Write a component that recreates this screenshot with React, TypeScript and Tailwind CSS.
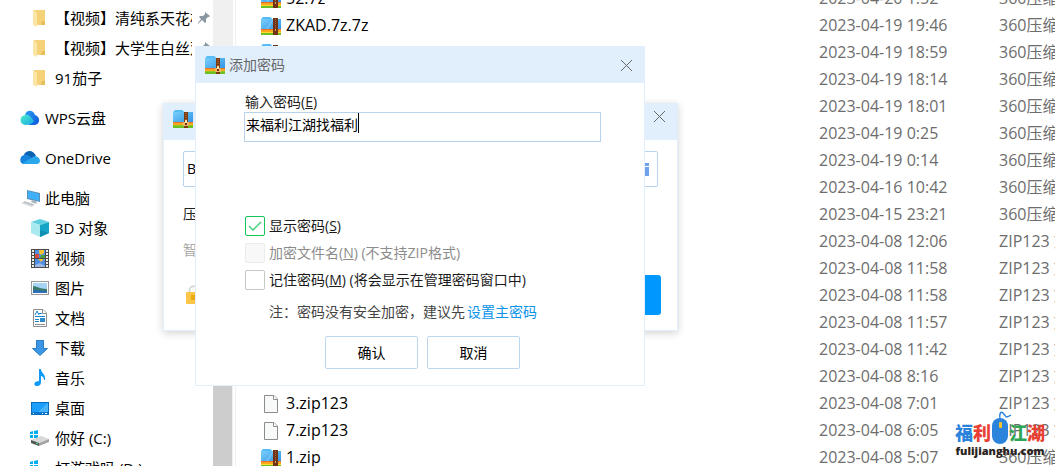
import React, { useState } from "react";

type IconType = "zip" | "file";

interface FileEntry {
  icon: IconType;
  name: string;
  date: string;
  type: string;
}

interface NavEntry {
  label: string;
  icon: React.ReactNode;
  pinned?: boolean;
}

const ZipIcon = ({ buckle = false }: { buckle?: boolean }) => (
  <svg width="20" height="18" viewBox="0 0 20 18" className="shrink-0" aria-hidden="true">
    <defs>
      <linearGradient id="zipBlue" x1="0" y1="0" x2="1" y2="1">
        <stop offset="0" stopColor="#7fd3ff" />
        <stop offset="1" stopColor="#2f93e2" />
      </linearGradient>
    </defs>
    <path d="M0 2 L2 0 H9 L11 2 H20 V13 H0Z" fill="url(#zipBlue)" />
    <path d="M2 0 H9 L11 2 H1Z" fill="#55bdf5" />
    {!buckle && <path d="M5 12 L11 3 H13 L7 12Z" fill="#8ad2fb" opacity="0.6" />}
    <rect y="12" width="20" height="1" fill="#e8702a" />
    <rect y="13" width="20" height="2" fill="#fba61c" />
    <rect y="15" width="20" height="1" fill={buckle ? "#8bc924" : "#fdd835"} />
    <rect y="16" width="20" height="2" fill="#6cc024" />
    {buckle ? (
      <>
        <rect x="11" y="2" width="4" height="16" fill="#7a3a12" />
        <path d="M13 3 V11" stroke="#c07a3c" strokeWidth="1" strokeDasharray="1 1" />
        <rect x="10" y="12" width="6" height="4" rx="1" fill="#f0b96b" />
        <rect x="12" y="10" width="2" height="4" fill="#fbe3b0" />
        <rect x="12" y="13" width="2" height="2" fill="#6b2f0d" />
      </>
    ) : (
      <>
        <rect x="12" y="1" width="5" height="17" fill="#6f3415" />
        <path d="M14.5 2 V12" stroke="#a3673a" strokeWidth="1" strokeDasharray="1 1" />
        <rect x="14" y="12" width="1" height="2" fill="#e3a55a" />
      </>
    )}
  </svg>
);

const DocIcon = () => (
  <svg width="20" height="20" viewBox="0 0 20 20" className="shrink-0" aria-hidden="true">
    <path d="M3.5 1.5 H13 L16.5 5 V18.5 H3.5Z" fill="#f8f9f9" stroke="#8c8c8c" />
    <path d="M12.5 1.5 V5.5 H16.5" fill="#fff" stroke="#8c8c8c" />
  </svg>
);

const FolderIcon = () => (
  <svg width="20" height="20" viewBox="0 0 20 20" aria-hidden="true">
    <path d="M4 2 H15 V17 H7 Z" fill="#f5d27a" />
    <path d="M12 13 H15 V17 H11Z" fill="#e6bd58" />
    <path d="M3 2 L7 5 V19 L3 17Z" fill="#fbe6a6" />
  </svg>
);

const WpsIcon = () => (
  <svg width="20" height="20" viewBox="0 0 20 20" aria-hidden="true">
    <defs>
      <linearGradient id="wpsLeft" x1="0" y1="0" x2="1" y2="1">
        <stop offset="0" stopColor="#4df0c4" />
        <stop offset="1" stopColor="#16a3ec" />
      </linearGradient>
      <linearGradient id="wpsRight" x1="0" y1="0" x2="1" y2="1">
        <stop offset="0" stopColor="#2b9df4" />
        <stop offset="1" stopColor="#0b55d9" />
      </linearGradient>
    </defs>
    <path d="M5 7 C6 2 13 1 15 7 C20 8 21 16 15 17 H9Z" fill="url(#wpsRight)" />
    <path d="M5 17 C-1 16 -1 8 5 7 C9 6 11 9 14 13 C12 16 9 17 5 17Z" fill="url(#wpsLeft)" />
  </svg>
);

const OneDriveIcon = () => (
  <svg width="20" height="20" viewBox="0 0 20 20" aria-hidden="true">
    <path d="M4 7 C6 2 13 1 16 8 L9 13Z" fill="#0a62b3" />
    <path d="M4 16 C-1 16 -1 8 4 7 C7 6 9 8 11 9 L13 16Z" fill="#1683dc" />
    <path d="M3 15 L13 9 C15 7 20 9 20 13 C20 15 18 16 17 16 H5Z" fill="#2aa6ea" />
  </svg>
);

const PcIcon = () => (
  <svg width="20" height="20" viewBox="0 0 20 20" aria-hidden="true">
    <path d="M7 2 L20 5 V14 L7 11Z" fill="#5b8fb5" />
    <path d="M8 3 L19 6 V13 L8 10Z" fill="#3fb1fa" />
    <path d="M12 12 L16 13 L17 16 L11 14Z" fill="#a9b3ba" />
    <path d="M5 13 L15 16 L12 19 L1 15Z" fill="#d5d9dc" />
    <path d="M4 14 L13 17" stroke="#b8bdc1" strokeWidth="1" />
  </svg>
);

const CubeIcon = () => (
  <svg width="20" height="20" viewBox="0 0 20 20" aria-hidden="true">
    <path d="M10 1 L19 4 L10 7 L1 4Z" fill="#5fd0e0" />
    <path d="M1 4 L10 7 V19 L1 15Z" fill="#a9e9ee" />
    <path d="M19 4 L10 7 V19 L19 15Z" fill="#16a5c6" />
    <path d="M10 12 L19 15 L10 19Z" fill="#0d8fb4" />
  </svg>
);

const VideoIcon = () => (
  <svg width="20" height="20" viewBox="0 0 20 20" aria-hidden="true">
    <rect x="1" y="1" width="18" height="19" fill="#4a4a4a" />
    <path d="M3 2 V20 M17 2 V20" stroke="#f0f0f0" strokeWidth="2" strokeDasharray="2 1" />
    <rect x="5" y="2" width="10" height="8" fill="#4f8fe8" />
    <rect x="5" y="11" width="10" height="8" fill="#4f8fe8" />
    <path d="M9 2 H14 V5 L11 7 L9 5Z" fill="#f3c332" />
    <path d="M5 6 H9 V10 H5Z" fill="#d94b3f" />
    <path d="M11 7 H15 V10 H10Z" fill="#4a9b46" />
    <path d="M8 11 H14 L11 14Z" fill="#f3c332" />
    <path d="M5 17 L10 15 L15 18 V19 H5Z" fill="#9cb8e8" />
  </svg>
);

const PictureIcon = () => (
  <svg width="20" height="20" viewBox="0 0 20 20" aria-hidden="true">
    <rect x="1.5" y="3.5" width="17" height="13" fill="#fff" stroke="#9a9a9a" />
    <rect x="3" y="5" width="14" height="10" fill="#a6d4f5" />
    <path d="M3 8 C7 8 9 11 17 11 V13 H3Z" fill="#3c7a68" />
    <path d="M3 12 C8 11 12 13 17 13 V15 H3Z" fill="#2d6fb4" />
  </svg>
);

const DocumentIcon = () => (
  <svg width="20" height="20" viewBox="0 0 20 20" aria-hidden="true">
    <path d="M3.5 1.5 H13 L16.5 5 V18.5 H3.5Z" fill="#fff" stroke="#8f8f8f" />
    <path d="M12.5 1.5 V5.5 H16.5" fill="#fff" stroke="#8f8f8f" />
    <path d="M5 7 L7 3 L9 7" stroke="#1c84cf" fill="none" />
    <path d="M9 5.5 H12 M5 8.5 H15 M5 11.5 H9 M5 13.5 H9" stroke="#1c84cf" />
    <rect x="10" y="10" width="5" height="4" fill="#2f8ac9" />
    <path d="M5 16.5 H15" stroke="#8f8f8f" />
  </svg>
);

const DownloadIcon = () => (
  <svg width="20" height="20" viewBox="0 0 20 20" aria-hidden="true">
    <path d="M6.5 2.5 H13.5 V10.5 H17.5 L10 17.5 L2.5 10.5 H6.5Z" fill="#3b97e6" stroke="#2a7bc5" />
  </svg>
);

const MusicIcon = () => (
  <svg width="20" height="20" viewBox="0 0 20 20" aria-hidden="true">
    <path d="M9 1 H11 C11 5 16 6 15 12 H14 C14 9 12 8 11 8 V14 C11 18 8 18 6 18 C3 17 4 13 9 13Z" fill="#0f9bf5" />
  </svg>
);

const DesktopIcon = () => (
  <svg width="20" height="20" viewBox="0 0 20 20" aria-hidden="true">
    <rect x="1.5" y="4.5" width="17" height="12" fill="#1c9efc" stroke="#0a6cb8" />
    <path d="M8 14 L18 5 V14Z" fill="#48b3fd" />
    <rect x="2" y="14" width="16" height="2" fill="#0a78d1" />
    <path d="M3 15.5 H4 M12 15.5 H13 M15 15.5 H17" stroke="#fff" />
  </svg>
);

const DriveIcon = () => (
  <svg width="20" height="20" viewBox="0 0 20 20" aria-hidden="true">
    <path d="M0 4 L3 3 V6 H0Z M4 3 L8 2 V6 H4Z M0 7 H3 V10 L0 10Z M4 7 H8 V11 L4 10Z" fill="#00adef" />
    <path d="M1 12 L11 8 L19 11 L9 15Z" fill="#d9d9d9" />
    <path d="M1 12 L9 15 V18 L1 15Z" fill="#4e5654" />
    <path d="M19 11 L9 15 V18 L19 14Z" fill="#a3a3a3" />
    <rect x="6" y="15" width="2" height="1" fill="#3fe07a" />
  </svg>
);

const PinIcon = () => (
  <svg width="14" height="14" viewBox="0 0 14 14" className="shrink-0" aria-hidden="true">
    <path d="M8 1 L13 5 L12 6 L11 6 L9 8 L9 11 L8 12 L5 9 L1 13 L1 12 L4 8 L2 6 L3 5 L6 5 L8 3Z" fill="#8a97a3" />
  </svg>
);

const LockIcon = () => (
  <svg width="20" height="22" viewBox="0 0 20 22" aria-hidden="true">
    <path d="M6.5 11 V6 C6.5 1 15.5 1 15.5 6 V11" fill="none" stroke="#d6d9dc" strokeWidth="2" />
    <rect x="3" y="8" width="15" height="12" rx="1" fill="#fbc548" />
    <rect x="8" y="11" width="4" height="5" fill="#eca913" />
  </svg>
);

const CloseIcon = () => (
  <svg width="13" height="13" viewBox="0 0 13 13" aria-hidden="true">
    <path d="M1 1 L12 12 M12 1 L1 12" stroke="#666" strokeWidth="1" />
  </svg>
);

const favorites: NavEntry[] = [
  { label: "【视频】清纯系天花板", icon: <FolderIcon />, pinned: true },
  { label: "【视频】大学生白丝双", icon: <FolderIcon />, pinned: true },
  { label: "91茄子", icon: <FolderIcon /> },
];

const computer: NavEntry[] = [
  { label: "3D 对象", icon: <CubeIcon /> },
  { label: "视频", icon: <VideoIcon /> },
  { label: "图片", icon: <PictureIcon /> },
  { label: "文档", icon: <DocumentIcon /> },
  { label: "下载", icon: <DownloadIcon /> },
  { label: "音乐", icon: <MusicIcon /> },
  { label: "桌面", icon: <DesktopIcon /> },
  { label: "你好 (C:)", icon: <DriveIcon /> },
  { label: "打游戏吗 (D:)", icon: <DriveIcon /> },
];

const files: FileEntry[] = [
  { icon: "zip", name: "52.7z", date: "2023-04-20 1:52", type: "360压缩" },
  { icon: "zip", name: "ZKAD.7z.7z", date: "2023-04-19 19:46", type: "360压缩" },
  { icon: "zip", name: "", date: "2023-04-19 18:59", type: "360压缩" },
  { icon: "zip", name: "", date: "2023-04-19 18:14", type: "360压缩" },
  { icon: "zip", name: "", date: "2023-04-19 18:01", type: "360压缩" },
  { icon: "zip", name: "", date: "2023-04-19 0:25", type: "360压缩" },
  { icon: "zip", name: "", date: "2023-04-19 0:14", type: "360压缩" },
  { icon: "zip", name: "", date: "2023-04-16 10:42", type: "360压缩" },
  { icon: "zip", name: "", date: "2023-04-15 23:21", type: "360压缩" },
  { icon: "file", name: "", date: "2023-04-08 12:06", type: "ZIP123 文件" },
  { icon: "file", name: "", date: "2023-04-08 11:58", type: "ZIP123 文件" },
  { icon: "file", name: "", date: "2023-04-08 11:58", type: "ZIP123 文件" },
  { icon: "file", name: "", date: "2023-04-08 11:57", type: "ZIP123 文件" },
  { icon: "file", name: "", date: "2023-04-08 11:42", type: "ZIP123 文件" },
  { icon: "file", name: "", date: "2023-04-08 8:16", type: "ZIP123 文件" },
  { icon: "file", name: "3.zip123", date: "2023-04-08 7:01", type: "ZIP123 文件" },
  { icon: "file", name: "7.zip123", date: "2023-04-08 6:05", type: "ZIP123 文件" },
  { icon: "zip", name: "1.zip", date: "2023-04-08 5:07", type: "360压缩" },
];

const NavItem = ({ item, nested = false }: { item: NavEntry; nested?: boolean }) => (
  <a href="#" className={`flex h-[30px] items-center gap-[5px] ${nested ? "pl-[30px]" : "pl-5"}`}>
    <span className="w-5 shrink-0">{item.icon}</span>
    <span className={`overflow-hidden whitespace-nowrap ${item.pinned ? "w-[137px]" : ""}`}>{item.label}</span>
    {item.pinned && <PinIcon />}
  </a>
);

const Sidebar = () => (
  <nav className="flex w-[213px] shrink-0 flex-col gap-[10px] overflow-hidden pt-[3px] text-[15px] leading-[30px] text-black">
    <div>
      {favorites.map((item) => (
        <NavItem key={item.label} item={item} nested />
      ))}
    </div>
    <NavItem item={{ label: "WPS云盘", icon: <WpsIcon /> }} />
    <NavItem item={{ label: "OneDrive", icon: <OneDriveIcon /> }} />
    <div>
      <NavItem item={{ label: "此电脑", icon: <PcIcon /> }} />
      {computer.map((item) => (
        <NavItem key={item.label} item={item} nested />
      ))}
    </div>
  </nav>
);

const FileTable = () => (
  <table className="-mt-[15px] w-full table-fixed text-base leading-[27px]">
    <colgroup>
      <col />
      <col className="w-[180px]" />
      <col className="w-[56px]" />
    </colgroup>
    <tbody>
      {files.map((file, index) => (
        <tr key={index} className="h-[27px] whitespace-nowrap text-[#6d6d6d]">
          <td className="p-0 pl-[25px] text-black">
            <div className="flex h-[27px] items-center gap-[5px]">
              {file.icon === "zip" ? <ZipIcon /> : <DocIcon />}
              {file.name}
            </div>
          </td>
          <td className="p-0">{file.date}</td>
          <td className="overflow-hidden p-0">{file.type}</td>
        </tr>
      ))}
    </tbody>
  </table>
);

const CompressDialog = () => (
  <section
    aria-label="360压缩"
    className="absolute top-[103px] left-[163px] w-[515px] border border-[#e1eefc] bg-white pb-[15px] shadow-[0_2px_8px_rgba(0,0,0,0.18)]"
  >
    <header className="flex h-9 items-start justify-between bg-[#e1effd] pt-[6px] pr-[11px] pl-[9px]">
      <ZipIcon buckle />
      <button type="button" aria-label="关闭">
        <CloseIcon />
      </button>
    </header>
    <div className="flex flex-col px-[19px] pt-[11px] text-sm">
      <div className="flex h-9 items-center rounded-[2px] border border-[#b9d2ee] pr-2 pl-[3px]">
        <input aria-label="文件名" defaultValue="B" className="min-w-0 flex-1 outline-none" />
        <svg width="13" height="13" viewBox="0 0 13 13" aria-hidden="true">
          <path d="M0 0 H13 V3 H0Z M0 4 H13 V13 H0Z" fill="#6fa1ea" />
        </svg>
      </div>
      <p className="mt-4 leading-[22px] text-[#222]">压</p>
      <p className="mt-[14px] leading-[22px] text-[#a8a8a8]">智</p>
      <div className="mt-[14px] flex h-10 items-center justify-between">
        <LockIcon />
        <button type="button" aria-label="立即压缩" className="-mr-[3px] h-10 w-[120px] rounded-[3px] bg-[#0097ff]" />
      </div>
    </div>
  </section>
);

interface OptionProps {
  id: string;
  checked: boolean;
  disabled?: boolean;
  onChange?: (value: boolean) => void;
  children: React.ReactNode;
}

const Option = ({ id, checked, disabled, onChange, children }: OptionProps) => (
  <div className="flex h-5 items-center gap-1 pl-px">
    <span className="relative flex">
      <input
        id={id}
        type="checkbox"
        checked={checked}
        disabled={disabled}
        onChange={(e) => onChange?.(e.target.checked)}
        className="size-5 appearance-none rounded-[2px] border border-[#c8c8c8] bg-white checked:border-[#14c75b] disabled:border-[#ececec] disabled:bg-[#f8f8f8]"
      />
      {checked && (
        <svg width="20" height="20" viewBox="0 0 20 20" className="pointer-events-none absolute inset-0" aria-hidden="true">
          <path d="M4 10 L8 14 L16 6" fill="none" stroke="#3fd27a" strokeWidth="1.4" />
        </svg>
      )}
    </span>
    <label htmlFor={id} className={disabled ? "text-[#8c8c8c]" : "text-[#1a1a1a]"}>
      {children}
    </label>
  </div>
);

const PasswordDialog = () => {
  const [password, setPassword] = useState("来福利江湖找福利");
  const [showPassword, setShowPassword] = useState(true);
  const [remember, setRemember] = useState(false);

  return (
    <form
      aria-label="添加密码"
      onSubmit={(e) => e.preventDefault()}
      className="absolute top-[46px] left-[195px] w-[450px] border border-[#e1eefc] bg-white pb-4 text-sm leading-5"
    >
      <header className="flex h-9 items-center justify-between bg-[#e1effd] pr-[11px] pl-[9px] text-[#666]">
        <div className="flex items-center gap-1">
          <ZipIcon buckle />
          <h1>添加密码</h1>
        </div>
        <button type="button" aria-label="关闭">
          <CloseIcon />
        </button>
      </header>

      <div className="pt-[9px] pr-[43px] pl-12">
        <label htmlFor="password" className="block pl-px text-[#222]">
          输入密码(<u>E</u>)
        </label>
        <div className="relative">
          <input
            id="password"
            type={showPassword ? "text" : "password"}
            value={password}
            onChange={(e) => setPassword(e.target.value)}
            className="block h-[30px] w-full border border-[#b9d2ee] pb-[7px] pl-px text-black outline-none"
          />
          {/* text caret */}
          <span className="absolute top-px left-[114px] h-5 w-px bg-black" />
        </div>

        <div className="mt-[74px] flex flex-col gap-[7px]">
          <Option id="show" checked={showPassword} onChange={setShowPassword}>
            显示密码(<u>S</u>)
          </Option>
          <Option id="encrypt-name" checked={false} disabled>
            加密文件名(<u>N</u>) (不支持ZIP格式)
          </Option>
          <Option id="remember" checked={remember} onChange={setRemember}>
            记住密码(<u>M</u>) (将会显示在管理密码窗口中)
          </Option>
        </div>

        <p className="mt-3 flex gap-[2px] pl-[25px] text-[#444]">
          注：密码没有安全加密，建议先
          <a href="#" className="text-[#0a93ea]">
            设置主密码
          </a>
        </p>

        <div className="mt-[14px] flex justify-center gap-[9px] text-black">
          <button type="submit" className="h-[33px] w-[93px] rounded-[2px] border border-[#bfd6ef]">
            确认
          </button>
          <button type="button" className="h-[33px] w-[93px] rounded-[2px] border border-[#bfd6ef]">
            取消
          </button>
        </div>
      </div>
    </form>
  );
};

const Watermark = () => (
  <div className="absolute right-[10px] bottom-[9px] flex flex-col items-center">
    <div className="flex items-end text-[18px] leading-6 font-black">
      <span className="text-[#2b83dc]">福</span>
      <span className="text-[#e93f33]">利</span>
      <svg width="18" height="34" viewBox="0 0 18 34" className="overflow-visible" aria-hidden="true">
        <path d="M9 8 C8 2 10 0 12 2 C15 5 14 8 20 4" fill="none" stroke="#2b83dc" strokeWidth="1.5" />
        <rect x="1" y="7" width="16" height="26" rx="8" fill="#2b83dc" />
        <rect x="8" y="11" width="3" height="6" rx="1" fill="#f5c22c" />
      </svg>
      <span className="text-[#2fa653]">江</span>
      <span className="text-[#e93f33]">湖</span>
    </div>
    <span className="text-[11px] leading-[12px] font-extrabold text-[#2a2320]">fulijianghu.com</span>
  </div>
);

const App = () => (
  <div className="relative flex h-screen overflow-hidden bg-white font-['Open_Sans','Noto_Sans_CJK_SC',sans-serif]">
    <Sidebar />
    <div className="flex w-5 shrink-0 flex-col justify-end bg-[#f0f0f0]">
      <div className="h-2/3 w-[19px] bg-[#cdcdcd]" />
    </div>
    <main className="ml-[2px] min-w-0 flex-1 overflow-hidden border-l border-[#f0f0f0]">
      <FileTable />
    </main>
    <CompressDialog />
    <PasswordDialog />
    <Watermark />
  </div>
);

export default App;
